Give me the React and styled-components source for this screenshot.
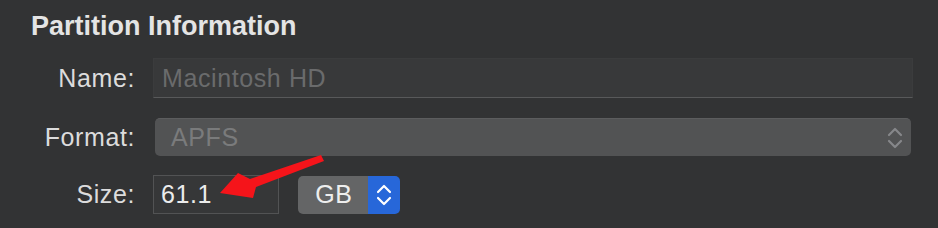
import React from 'react'
import styled, { createGlobalStyle } from 'styled-components'

const GlobalStyle = createGlobalStyle`
  html, body {
    margin: 0;
    padding: 0;
    background: #323334;
    font-family: "Liberation Sans", Arial, sans-serif;
  }
`

const Page = styled.div`
  position: relative;
  width: 938px;
  height: 228px;
  padding: 11px 0 0 31px;
  box-sizing: border-box;
  overflow: hidden;
`

const Title = styled.h2`
  margin: 0;
  font-size: 27px;
  font-weight: 700;
  color: #e4e4e4;
  line-height: 30px;
`

const Form = styled.div`
  display: grid;
  grid-template-columns: 104px 1fr;
  column-gap: 18px;
  margin-top: 17px;
  letter-spacing: 0.6px;
`

const Label = styled.div`
  font-size: 25px;
  color: #dcdcdc;
  text-align: right;
  align-self: center;
  margin-top: ${(p) => p.offset || 0}px;
`

const NameField = styled.div`
  width: 760px;
  height: 40px;
  box-sizing: border-box;
  background: #38393a;
  border: 1px solid #3b3c3d;
  border-bottom: 1px solid #58595a;
  padding-left: 8px;
  display: flex;
  align-items: center;
  font-size: 25px;
  color: #6a6b6c;
`

const Popup = styled.div`
  margin: 20px 0 0 2px;
  width: 756px;
  height: 38px;
  box-sizing: border-box;
  background: #525354;
  border-radius: 5px;
  border-top: 1px solid #5c5d5e;
  display: flex;
  align-items: center;
  justify-content: space-between;
  padding: 0 8px 0 16px;
  font-size: 25px;
  color: #7a7b7c;
`

const SizeRow = styled.div`
  display: flex;
  align-items: center;
  gap: 19px;
  margin-top: 19px;
`

const SizeField = styled.div`
  width: 126px;
  height: 39px;
  box-sizing: border-box;
  background: #363738;
  border: 1px solid #525354;
  padding-left: 7px;
  display: flex;
  align-items: center;
  font-size: 25px;
  color: #ececec;
`

const UnitPopup = styled.div`
  display: flex;
  width: 102px;
  height: 38px;
  border-radius: 5px;
  overflow: hidden;
`

const UnitLabel = styled.div`
  flex: 1;
  background: #646566;
  display: flex;
  align-items: center;
  justify-content: center;
  font-size: 25px;
  color: #eeeeee;
  padding-left: 2px;
`

const UnitArrows = styled.div`
  width: 32px;
  background: #2767d9;
  display: flex;
  align-items: center;
  justify-content: center;
`

const Arrow = styled.svg`
  position: absolute;
  left: 0;
  top: 0;
  pointer-events: none;
`

const Chevrons = ({ color }) => (
  <svg width="16" height="24" viewBox="0 0 16 24">
    <path d="M2 9 L8 3 L14 9" fill="none" stroke={color} strokeWidth="2.2" strokeLinecap="round" strokeLinejoin="round" />
    <path d="M2 15 L8 21 L14 15" fill="none" stroke={color} strokeWidth="2.2" strokeLinecap="round" strokeLinejoin="round" />
  </svg>
)

export default function App() {
  return (
    <Page>
      <GlobalStyle />
      <Title>Partition Information</Title>
      <Form>
        <Label>Name:</Label>
        <NameField>Macintosh HD</NameField>
        <Label offset={20}>Format:</Label>
        <Popup>
          <span>APFS</span>
          <Chevrons color="#86878a" />
        </Popup>
        <Label offset={19}>Size:</Label>
        <SizeRow>
          <SizeField>61.1</SizeField>
          <UnitPopup>
            <UnitLabel>GB</UnitLabel>
            <UnitArrows>
              <Chevrons color="#ffffff" />
            </UnitArrows>
          </UnitPopup>
        </SizeRow>
      </Form>
      <Arrow width="938" height="228" viewBox="0 0 938 228">
        <polygon points="321,155 324,161 256,187 253,198 220,193 238,173 250,179" fill="#f5141a" />
      </Arrow>
    </Page>
  )
}
